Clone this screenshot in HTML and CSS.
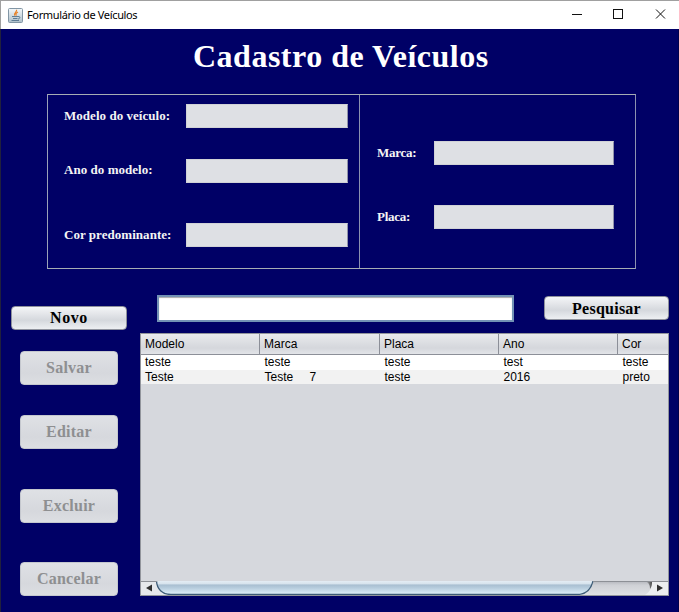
FILE: index.html
```html
<!DOCTYPE html>
<html lang="pt-BR">
<head>
<meta charset="utf-8">
<title>Formulário de Veículos</title>
<link rel="stylesheet" href="styles.css">
</head>
<body>
<div class="window">
  <header class="titlebar">
    <svg class="app-icon" width="15" height="15" viewBox="0 0 15 15">
      <defs><linearGradient id="tile" x1="0" y1="0" x2="0" y2="1"><stop offset="0" stop-color="#f4f8fa"/><stop offset="1" stop-color="#aebfca"/></linearGradient></defs>
      <rect x=".5" y=".5" width="14" height="14" rx="1" fill="url(#tile)" stroke="#8296a5"/>
      <path d="M8.500 1.800C9.500 4 5 5 6.800 7.600M10 4C7.800 5 7.500 6 8.400 7.600" fill="none" stroke="#e98124" stroke-width="1.2"/>
      <path d="M4 8.500h6M5 10.500h4.500M3.500 12.500h7.500M10 8.500c3-.5 2 2.500 0 2.500" fill="none" stroke="#53748d" stroke-width=".9"/>
    </svg>
    <span class="caption">Formulário de Veículos</span>
    <svg class="controls" width="94" height="12" viewBox="0 0 94 12" fill="none" stroke="#111">
      <path d="M0 5.500h10"/><rect x="41.500" y=".5" width="9" height="9"/><path d="M84 .5l9 9M93 .5l-9 9"/>
    </svg>
  </header>
  <main class="content">
    <h1>Cadastro de Veículos</h1>
    <section class="form">
      <div class="group group-left">
        <label class="label" for="modelo">Modelo do veículo:</label><input id="modelo" disabled>
        <label class="label ano" for="ano">Ano do modelo:</label><input id="ano" disabled>
        <label class="label" for="cor">Cor predominante:</label><input id="cor" disabled>
      </div>
      <div class="group group-right">
        <label class="label" for="marca">Marca:</label><input id="marca" disabled>
        <label class="label" for="placa">Placa:</label><input id="placa" disabled>
      </div>
    </section>
    <div class="lower">
      <nav class="actions">
        <button class="button new">Novo</button>
        <button class="button" disabled>Salvar</button>
        <button class="button edit" disabled>Editar</button>
        <button class="button" disabled>Excluir</button>
        <button class="button" disabled>Cancelar</button>
      </nav>
      <section class="results">
        <div class="search">
          <input class="query" aria-label="Pesquisar">
          <button class="button find">Pesquisar</button>
        </div>
        <div class="table">
          <div class="row head"><span>Modelo</span><span>Marca</span><span>Placa</span><span>Ano</span><span>Cor</span></div>
          <div class="row"><span>teste</span><span>teste</span><span>teste</span><span>test</span><span>teste</span></div>
          <div class="row alt"><span>Teste</span><span>Teste <i>7</i></span><span>teste</span><span>2016</span><span>preto</span></div>
          <div class="void"></div>
          <svg class="scroll" width="527" height="14" viewBox="0 0 527 14">
            <defs>
              <linearGradient id="track" x1="0" y1="0" x2="0" y2="1"><stop offset="0" stop-color="#b4b6bc"/><stop offset=".3" stop-color="#cfd1d6"/><stop offset="1" stop-color="#dfe1e4"/></linearGradient>
              <linearGradient id="thumb" x1="0" y1="0" x2="0" y2="1"><stop offset="0" stop-color="#e4edf4"/><stop offset=".2" stop-color="#d7e3ed"/><stop offset=".3" stop-color="#a9bfd1"/><stop offset=".5" stop-color="#b5cbdc"/><stop offset="1" stop-color="#e2f3fc"/></linearGradient>
              <linearGradient id="edge" x1="0" y1="0" x2="1" y2="0"><stop offset="0" stop-color="#555" stop-opacity="0"/><stop offset="1" stop-color="#444"/></linearGradient>
            </defs>
            <rect width="527" height="14" fill="url(#track)"/>
            <path d="M0 0h15.500C16 8 20 12 29 14H0z" fill="#e6e8eb"/>
            <path d="M527 0h-16c0 7-2 11-7 14h23z" fill="#eceef0"/>
            <path d="M504 0h7c0 4-.5 6-2 8 0-4-1-6-5-8z" fill="url(#edge)"/>
            <path d="M15.500 0C16 8 21 13.500 30 13.500H436C446 13.500 450 8 452 0z" fill="url(#thumb)"/>
            <path d="M15.500 0C16 8 21 13.500 30 13.500H436C446 13.500 450 8 452 0" fill="none" stroke="#3d5c77" stroke-width="1.300"/>
            <path d="M0 .5h16M452 .5h75" stroke="#8d9096"/>
            <path d="M5 7l6-3.500v7z" fill="#303030"/><path d="M522 7l-6-3.500v7z" fill="#303030"/>
          </svg>
        </div>
      </section>
    </div>
  </main>
</div>
</body>
</html>
```
FILE: styles.css
```css
* { box-sizing: border-box; }
body { margin: 0; overflow: hidden; }
.window {
  width: 679px;
  height: 612px;
  display: flex;
  flex-direction: column;
  background: #000066;
}
.titlebar {
  height: 29px;
  flex: none;
  display: flex;
  align-items: center;
  padding: 0 13px 0 7px;
  border-top: 1px solid #a0a0a0;
  border-left: 1px solid #a0a0a0;
  background: #fff;
}
.caption {
  margin: 0 auto 0 4px;
  font: 11px/14px "Noto Sans", sans-serif;
  letter-spacing: -.35px;
  color: #000;
}
.content {
  flex: 1;
  display: flex;
  flex-direction: column;
  border-left: 1px solid #20203c;
  border-right: 1px solid #00004c;
  font-family: "Liberation Serif", serif;
}
h1 {
  margin: 8px 0 0 192px;
  height: 38px;
  font-size: 32px;
  line-height: 38px;
  letter-spacing: .5px;
  color: #fff;
  white-space: nowrap;
}
.form {
  display: grid;
  grid-template-columns: 312px 275px;
  width: 589px;
  height: 175px;
  margin: 19px 0 0 46px;
  border: 1px solid #a6adb3;
  border-left-color: #9aa2b8;
  border-right-color: #8b91b0;
}
.group {
  display: grid;
  align-content: start;
  align-items: center;
}
.group-left {
  grid-template-columns: 122px 162px;
  grid-template-rows: 24px 24px 42px;
  row-gap: 31px;
  padding: 9px 0 0 16px;
  border-right: 1px solid #8b91b0;
}
.ano { margin-bottom: 2px; }
.group-right {
  grid-template-columns: 57px 180px;
  grid-template-rows: 24px 24px;
  row-gap: 40px;
  padding: 46px 0 0 17px;
}
.label {
  font-size: 13px;
  font-weight: bold;
  line-height: 16px;
  color: #f4f4f4;
  white-space: nowrap;
}
.group-left .label { letter-spacing: .04px; }
.group-right .label { letter-spacing: -.25px; }
.form input {
  width: 100%;
  height: 24px;
  padding: 0;
  border: 1px solid #d0d2d6;
  border-right-color: #9092aa;
  background: #dee0e4;
}
.lower { display: flex; margin-top: 26px; }
.actions {
  width: 139px;
  display: flex;
  flex-direction: column;
  padding: 11px 0 0 10px;
}
.button {
  width: 98px;
  height: 34px;
  margin: 0 0 0 9px;
  padding: 0;
  border: 1px solid #c4c7ce;
  border-radius: 4px;
  background: linear-gradient(#dfe1e5, #d6d8dd 65%, #dcdee2);
  font: bold 16px/20px "Liberation Serif", serif;
  letter-spacing: .25px;
  color: #8e8f91;
}
.button + .button { margin-top: 39.500px; }
.button.new + .button { margin-top: 21px; }
.button.edit { margin-top: 30px; }
.button.new, .button.find {
  height: 24px;
  margin: 0;
  border-color: #8e919c;
  background: linear-gradient(#f4f5f7, #e2e4e8 35%, #d5d8dd 60%, #edeff2);
  color: #000;
}
.button.new { width: 116px; letter-spacing: .6px; }
.results { width: 529px; }
.search {
  display: flex;
  align-items: center;
  height: 27px;
  margin-bottom: 11px;
  padding-left: 17px;
}
.query {
  width: 357px;
  height: 27px;
  padding: 0;
  border: 2px solid #7392b5;
  background: #fff;
  box-shadow: inset 0 1px 1px #aaa;
}
.button.find { width: 125px; margin: 0 0 1px 30px; padding-top: 2px; }
.table {
  display: flex;
  flex-direction: column;
  height: 263px;
  border: 1px solid #92959c;
  background: #d6d8dd;
}
.row {
  display: grid;
  grid-template-columns: 118px 120px 119px 119px 51px;
  height: 15px;
  background: #fff;
  font: 12px/15px "Liberation Sans", sans-serif;
  color: #000;
}
.row span { padding-left: 4px; white-space: nowrap; }
.row i { margin-left: 13px; font-style: normal; }
.row.head {
  height: 21px;
  line-height: 20px;
  border-bottom: 1px solid #8c8f98;
  background: linear-gradient(#e9eaed, #dddfe3 40%, #d5d7dc 70%, #e2e4e8);
}
.head span + span { border-left: 1px solid #8c8f98; }
.row:not(.head) span + span { padding-left: 5.500px; }
.row.alt { height: 14px; line-height: 14px; background: #f2f2f2; }
.void { flex: 1; }
.scroll { display: block; }
```
